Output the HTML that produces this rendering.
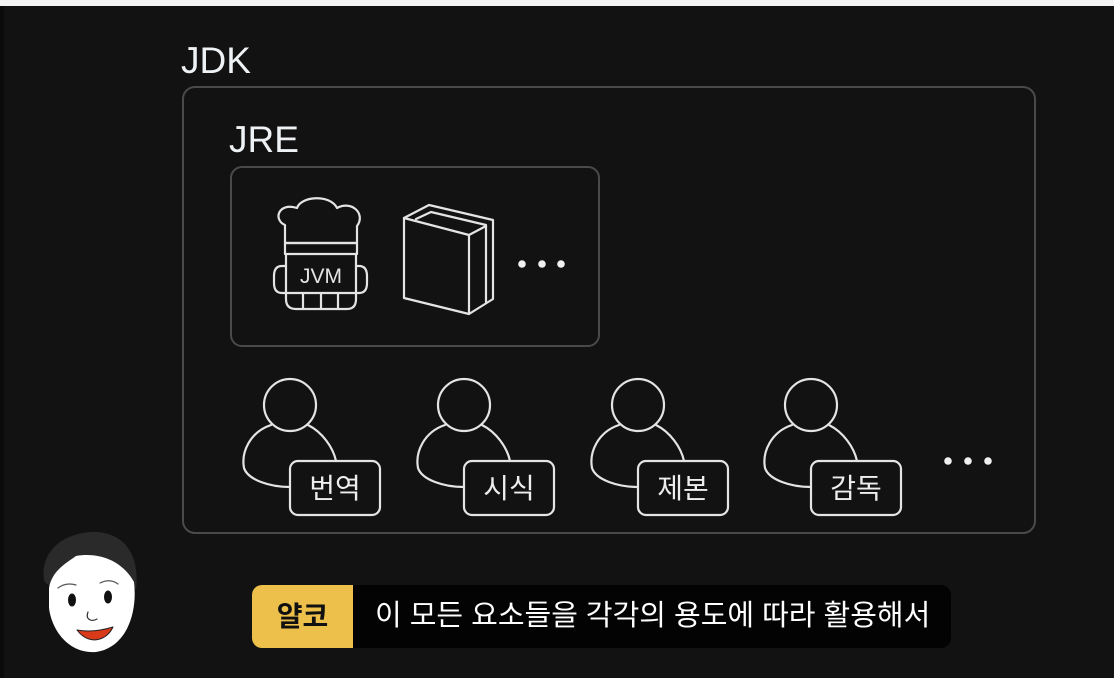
<!DOCTYPE html>
<html><head><meta charset="utf-8"><style>
html,body{margin:0;padding:0;}
body{width:1114px;height:678px;background:#121212;position:relative;overflow:hidden;font-family:"Liberation Sans","Noto Sans CJK KR",sans-serif;}
.top{position:absolute;left:0;top:0;width:1114px;height:6px;background:#f4f4f4;}
.lbl{position:absolute;color:#eef2f4;font-size:37px;line-height:1;}
.sub{position:absolute;top:585px;height:63px;}
</style></head><body>
<div class="top"></div>
<div style="position:absolute;left:0;top:6px;width:4px;height:672px;background:#0b0b0b"></div>
<div class="lbl" style="left:181px;top:42px;">JDK</div>
<div class="lbl" style="left:229px;top:121px;">JRE</div>
<svg width="1114" height="678" style="position:absolute;left:0;top:0" fill="none" stroke="#e4e4e4" stroke-width="2.2" stroke-linejoin="round" stroke-linecap="round">
<rect x="183" y="87" width="852" height="446" rx="12" stroke="#4a4a4a" stroke-width="2"/>
<rect x="231" y="167" width="368" height="179" rx="11" stroke="#4a4a4a" stroke-width="2"/>
<!-- chef -->
<path d="M285 243 L285 225 C273 220 278 202 297 208 C301 196 330 194 337 208 C352 200 366 214 357 226 L357 243 Z"/>
<rect x="285" y="243" width="72" height="11"/>
<path d="M286 254 L286 299 Q286 309 296 309 L347 309 Q356 309 356 299 L356 254"/>
<path d="M286 266 L282 266 Q274 266 274 276 L274 283 Q274 293 282 293 L286 293 M356 266 L359 266 Q367 266 367 276 L367 283 Q367 293 359 293 L356 293"/>
<path d="M286 293 L356 293 M303 293 L303 309 M321 293 L321 309 M338 293 L338 309"/>
<text x="321" y="283" fill="#e4e4e4" stroke="none" font-size="21" text-anchor="middle" font-family="Liberation Sans">JVM</text>
<!-- book -->
<path d="M404 218 L469 235 L469 314 L404 298 Z"/>
<path d="M404 218 L429 205 L493 220 L493 299 L469 314"/>
<path d="M416 219 L431 212 L486 225 L486 302"/>
<path d="M469 235 L486 226"/>
<g fill="#f0f0f0" stroke="none"><circle cx="522" cy="264" r="3.8"/><circle cx="542" cy="264" r="3.8"/><circle cx="561" cy="264" r="3.8"/>
<circle cx="948" cy="461" r="3.8"/><circle cx="968" cy="461" r="3.8"/><circle cx="988" cy="461" r="3.8"/></g>
<!-- people -->
<g id="p">
<circle cx="290" cy="405" r="26"/>
<path d="M271 425 C250 432 241 452 244 468 C248 480 270 487 290 487 M308 425 C322 432 333 447 336 461"/>
<rect x="290" y="461" width="90" height="54" rx="8"/>
</g>
<use href="#p" x="174"/>
<use href="#p" x="348"/>
<use href="#p" x="521"/>
<g fill="#eee" stroke="none" font-size="28" text-anchor="middle" font-family="Liberation Sans, Noto Sans CJK KR, sans-serif">
<text x="335" y="498">번역</text><text x="509" y="498">시식</text><text x="683" y="498">제본</text><text x="856" y="498">감독</text>
</g>
<!-- face -->
<path d="M44 580 C40 550 65 532 95 532 C125 533 140 555 136 590 L132 582 C118 562 88 556 68 566 C58 580 50 592 44 580 Z" fill="#2a2a2a" stroke="none"/>
<path d="M49 588 C52 570 68 562 76 556 C98 552 122 560 134 582 C138 615 125 648 96 652 C70 654 52 632 49 608 Z" fill="#fff" stroke="none"/>
<path d="M58 588 Q66 582 76 585 M100 583 Q110 578 118 584" stroke="#555" stroke-width="1.2"/>
<ellipse cx="72" cy="600" rx="4" ry="6.5" fill="#111" stroke="none"/>
<ellipse cx="108" cy="597" rx="4" ry="6.5" fill="#111" stroke="none"/>
<path d="M77 630 C88 645 106 642 113 627 C100 631 88 632 77 630 Z" fill="#d93a1a" stroke="#222" stroke-width="1"/>
<path d="M88 612 C85 620 92 622 97 619" stroke="#333" stroke-width="1.2"/>
</svg>
<div class="sub" style="left:252px;width:101px;background:#ecc04a;border-radius:10px 0 0 10px;color:#111;font-weight:bold;font-size:28px;line-height:63px;text-align:center;">얄코</div>
<div class="sub" style="left:353px;width:598px;background:#030303;border-radius:0 10px 10px 0;color:#fff;font-size:29px;line-height:63px;padding-left:22px;box-sizing:border-box;white-space:nowrap;">이 모든 요소들을 각각의 용도에 따라 활용해서</div>
</body></html>
